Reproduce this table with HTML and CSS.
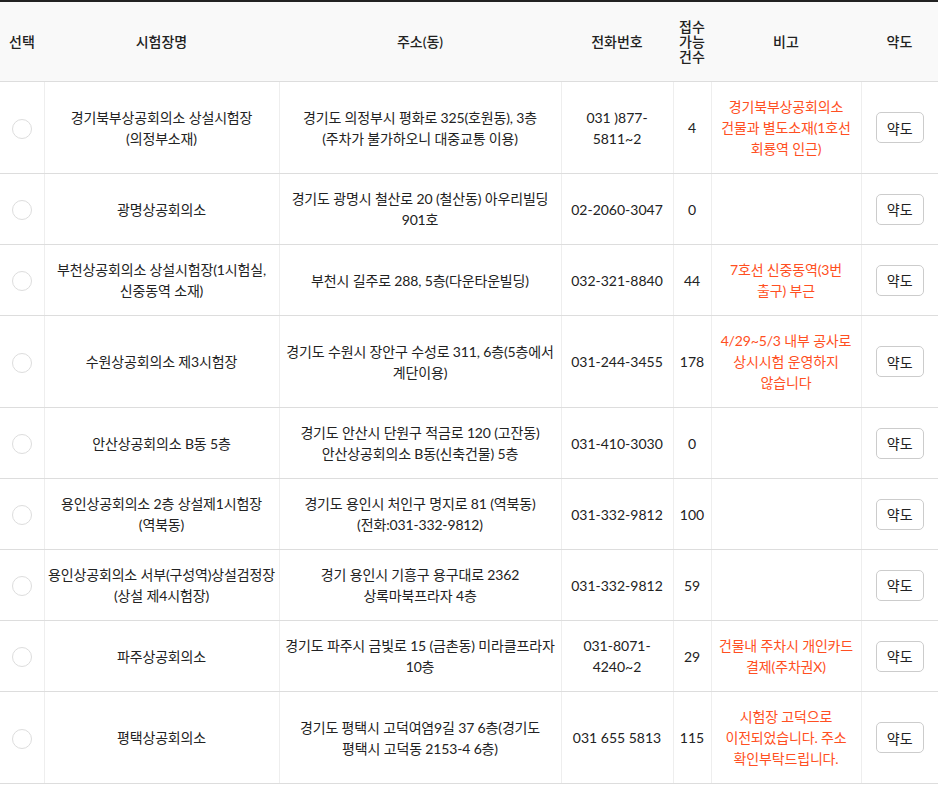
FILE: index.html
```html
<!DOCTYPE html>
<html lang="ko">
<head>
<meta charset="utf-8">
<title>시험장 선택</title>
<link rel="stylesheet" href="styles.css">
</head>
<body>
<table class="site-table">
  <colgroup>
    <col class="c-sel"><col class="c-name"><col class="c-addr"><col class="c-tel"><col class="c-cnt"><col class="c-note"><col class="c-map">
  </colgroup>
  <thead>
    <tr>
      <th>선택</th>
      <th>시험장명</th>
      <th>주소(동)</th>
      <th>전화번호</th>
      <th class="cnt-head">접수가능건수</th>
      <th>비고</th>
      <th>약도</th>
    </tr>
  </thead>
  <tbody>
    <tr>
      <td class="sel"><span class="radio"></span></td>
      <td class="name">경기북부상공회의소 상설시험장 (의정부소재)</td>
      <td class="addr">경기도 의정부시 평화로 325(호원동), 3층<br>(주차가 불가하오니 대중교통 이용)</td>
      <td class="tel">031 )877-5811~2</td>
      <td class="cnt">4</td>
      <td class="note">경기북부상공회의소 건물과 별도소재(1호선 회룡역 인근)</td>
      <td class="map"><button class="map-btn" type="button">약도</button></td>
    </tr>
    <tr>
      <td class="sel"><span class="radio"></span></td>
      <td class="name">광명상공회의소</td>
      <td class="addr">경기도 광명시 철산로 20 (철산동) 아우리빌딩 901호</td>
      <td class="tel">02-2060-3047</td>
      <td class="cnt">0</td>
      <td class="note"></td>
      <td class="map"><button class="map-btn" type="button">약도</button></td>
    </tr>
    <tr>
      <td class="sel"><span class="radio"></span></td>
      <td class="name">부천상공회의소 상설시험장(1시험실, 신중동역 소재)</td>
      <td class="addr">부천시 길주로 288, 5층(다운타운빌딩)</td>
      <td class="tel">032-321-8840</td>
      <td class="cnt">44</td>
      <td class="note">7호선 신중동역(3번 출구) 부근</td>
      <td class="map"><button class="map-btn" type="button">약도</button></td>
    </tr>
    <tr>
      <td class="sel"><span class="radio"></span></td>
      <td class="name">수원상공회의소 제3시험장</td>
      <td class="addr">경기도 수원시 장안구 수성로 311, 6층(5층에서 계단이용)</td>
      <td class="tel">031-244-3455</td>
      <td class="cnt">178</td>
      <td class="note">4/29~5/3 내부 공사로 상시시험 운영하지 않습니다</td>
      <td class="map"><button class="map-btn" type="button">약도</button></td>
    </tr>
    <tr>
      <td class="sel"><span class="radio"></span></td>
      <td class="name">안산상공회의소 B동 5층</td>
      <td class="addr">경기도 안산시 단원구 적금로 120 (고잔동)<br>안산상공회의소 B동(신축건물) 5층</td>
      <td class="tel">031-410-3030</td>
      <td class="cnt">0</td>
      <td class="note"></td>
      <td class="map"><button class="map-btn" type="button">약도</button></td>
    </tr>
    <tr>
      <td class="sel"><span class="radio"></span></td>
      <td class="name">용인상공회의소 2층 상설제1시험장 (역북동)</td>
      <td class="addr">경기도 용인시 처인구 명지로 81 (역북동)<br>(전화:031-332-9812)</td>
      <td class="tel">031-332-9812</td>
      <td class="cnt">100</td>
      <td class="note"></td>
      <td class="map"><button class="map-btn" type="button">약도</button></td>
    </tr>
    <tr>
      <td class="sel"><span class="radio"></span></td>
      <td class="name">용인상공회의소 서부(구성역)상설검정장 (상설 제4시험장)</td>
      <td class="addr">경기 용인시 기흥구 용구대로 2362<br>상록마북프라자 4층</td>
      <td class="tel">031-332-9812</td>
      <td class="cnt">59</td>
      <td class="note"></td>
      <td class="map"><button class="map-btn" type="button">약도</button></td>
    </tr>
    <tr>
      <td class="sel"><span class="radio"></span></td>
      <td class="name">파주상공회의소</td>
      <td class="addr">경기도 파주시 금빛로 15 (금촌동) 미라클프라자 10층</td>
      <td class="tel">031-8071-4240~2</td>
      <td class="cnt">29</td>
      <td class="note">건물내 주차시 개인카드 결제(주차권X)</td>
      <td class="map"><button class="map-btn" type="button">약도</button></td>
    </tr>
    <tr>
      <td class="sel"><span class="radio"></span></td>
      <td class="name">평택상공회의소</td>
      <td class="addr">경기도 평택시 고덕여염9길 37 6층(경기도 평택시 고덕동 2153-4 6층)</td>
      <td class="tel">031 655 5813</td>
      <td class="cnt">115</td>
      <td class="note">시험장 고덕으로 이전되었습니다. 주소 확인부탁드립니다.</td>
      <td class="map"><button class="map-btn" type="button">약도</button></td>
    </tr>
  </tbody>
</table>
</body>
</html>
```

FILE: styles.css
```css
html, body {
  margin: 0;
  padding: 0;
  background: #fff;
}
body {
  font-family: Lato, "Noto Sans CJK KR", sans-serif;
  font-size: 14px;
  color: #222;
}
.site-table {
  width: 938px;
  table-layout: fixed;
  border-collapse: collapse;
  border-top: 2px solid #222;
}
.c-sel { width: 44px; }
.c-name { width: 235px; }
.c-addr { width: 282px; }
.c-tel { width: 112px; }
.c-cnt { width: 38px; }
.c-note { width: 150px; }
.c-map { width: 77px; }

.site-table th {
  height: 79px;
  padding: 0 5px;
  background: #f9f9f9;
  font-weight: 500;
  font-size: 14px;
  line-height: 15px;
  color: #222;
  border-bottom: 1px solid #ddd;
  text-align: center;
  vertical-align: middle;
}
.site-table th.cnt-head {
  padding: 0 4px;
}
.site-table td {
  padding: 14px 2px;
  line-height: 21px;
  text-align: center;
  vertical-align: middle;
  border-bottom: 1px solid #ddd;
  border-left: 1px solid #eee;
  word-break: keep-all;
  overflow-wrap: break-word;
  letter-spacing: -0.15px;
}
.site-table td.sel {
  border-left: none;
  padding: 0;
}
.site-table td.name {
  padding: 14px 1px;
}
.site-table td.tel {
  padding: 14px 5px;
  letter-spacing: 0;
}
.site-table td.cnt {
  letter-spacing: 0;
}
.site-table td.note {
  color: #ff4f22;
  padding: 14px 4px;
}
.radio {
  display: inline-block;
  width: 18px;
  height: 18px;
  border: 1px solid #ddd;
  border-radius: 50%;
  background: #fff;
  vertical-align: middle;
}
.map-btn {
  width: 48px;
  height: 31px;
  border: 1px solid #ccc;
  border-radius: 5px;
  background: #fff;
  font-family: Lato, "Noto Sans CJK KR", sans-serif;
  font-size: 14px;
  color: #222;
  padding: 0;
  cursor: pointer;
}
```
